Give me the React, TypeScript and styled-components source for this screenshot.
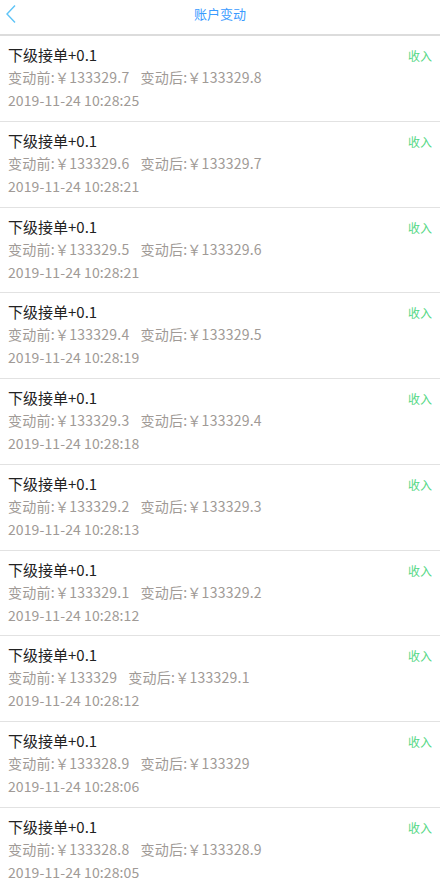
import React from "react";
import styled, { createGlobalStyle } from "styled-components";

const GlobalStyle = createGlobalStyle`
  html, body { margin: 0; padding: 0; background: #fff; }
  body { font-family: "Noto Sans CJK SC", "Noto Sans", sans-serif; }
`;

const Page = styled.div`
  width: 440px;
  display: flex;
  flex-direction: column;
`;

const Header = styled.div`
  height: 34px;
  border-bottom: 2px solid #dcdcdc;
  display: flex;
  align-items: center;
  justify-content: center;
  position: relative;
`;

const Back = styled.div`
  position: absolute;
  left: 4px;
  top: 4px;
  width: 14px;
  height: 20px;
  display: flex;
`;

const Title = styled.div`
  font-size: 13px;
  color: #3a9bff;
  line-height: 28px;
  margin-top: -6px;
`;

const List = styled.div`
  display: flex;
  flex-direction: column;
`;

const Item = styled.div`
  height: 84.75px;
  border-bottom: 1px solid #e2e2e2;
  padding: 0 8px;
  display: flex;
  justify-content: space-between;
  box-sizing: content-box;
`;

const Info = styled.div`
  display: flex;
  flex-direction: column;
  padding-top: 8px;
`;

const ItemTitle = styled.div`
  font-size: 15px;
  color: #222;
  line-height: 22px;
`;

const Amounts = styled.div`
  font-size: 14px;
  color: #a09a96;
  line-height: 22px;
  display: flex;
  gap: 11px;
  letter-spacing: 0.25px;
`;

const Time = styled.div`
  font-size: 14px;
  color: #a09a96;
  line-height: 22px;
  margin-top: 1px;
  letter-spacing: 0.1px;
`;

const Tag = styled.div`
  font-size: 12px;
  color: #55d884;
  padding-top: 10px;
  line-height: 20px;
`;

const data = [
  ["133329.7", "133329.8", "2019-11-24 10:28:25"],
  ["133329.6", "133329.7", "2019-11-24 10:28:21"],
  ["133329.5", "133329.6", "2019-11-24 10:28:21"],
  ["133329.4", "133329.5", "2019-11-24 10:28:19"],
  ["133329.3", "133329.4", "2019-11-24 10:28:18"],
  ["133329.2", "133329.3", "2019-11-24 10:28:13"],
  ["133329.1", "133329.2", "2019-11-24 10:28:12"],
  ["133329", "133329.1", "2019-11-24 10:28:12"],
  ["133328.9", "133329", "2019-11-24 10:28:06"],
  ["133328.8", "133328.9", "2019-11-24 10:28:05"],
];

export default function App() {
  return (
    <Page>
      <GlobalStyle />
      <Header>
        <Back>
          <svg width="14" height="20" viewBox="0 0 14 20">
            <path d="M11 1.5 L3 10 L11 18.5" fill="none" stroke="#5ec4f7" strokeWidth="1.4" />
          </svg>
        </Back>
        <Title>账户变动</Title>
      </Header>
      <List>
        {data.map(([before, after, time], i) => (
          <Item key={i}>
            <Info>
              <ItemTitle>下级接单+0.1</ItemTitle>
              <Amounts>
                <span>变动前:￥{before}</span>
                <span>变动后:￥{after}</span>
              </Amounts>
              <Time>{time}</Time>
            </Info>
            <Tag>收入</Tag>
          </Item>
        ))}
      </List>
    </Page>
  );
}
